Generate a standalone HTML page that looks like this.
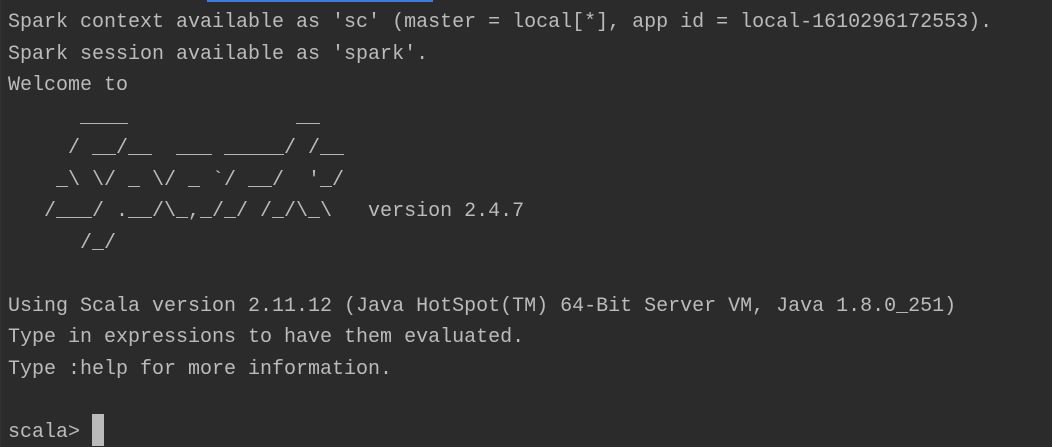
<!DOCTYPE html>
<html><head><meta charset="utf-8"><style>
html,body{margin:0;padding:0;background:#2b2b2b;width:1052px;height:447px;overflow:hidden;position:relative}
.bar{position:absolute;left:207px;top:0;width:226px;height:2px;background:#3d7fe0}
pre{position:absolute;left:8px;top:7px;margin:0;font-family:"Liberation Mono",monospace;font-size:20px;line-height:31.5px;color:#bbbbbb;letter-spacing:0}
.cur{position:absolute;left:92px;top:414px;width:12px;height:32px;background:#bbbbbb}
.lb{position:absolute;left:0;top:0;width:1px;height:447px;background:#323232}
</style></head><body>
<div class="lb"></div>
<div class="bar"></div>
<pre>Spark context available as 'sc' (master = local[*], app id = local-1610296172553).
Spark session available as 'spark'.
Welcome to
      ____              __
     / __/__  ___ _____/ /__
    _\ \/ _ \/ _ `/ __/  '_/
   /___/ .__/\_,_/_/ /_/\_\   version 2.4.7
      /_/

Using Scala version 2.11.12 (Java HotSpot(TM) 64-Bit Server VM, Java 1.8.0_251)
Type in expressions to have them evaluated.
Type :help for more information.

scala> </pre>
<div class="cur"></div>
</body></html>
